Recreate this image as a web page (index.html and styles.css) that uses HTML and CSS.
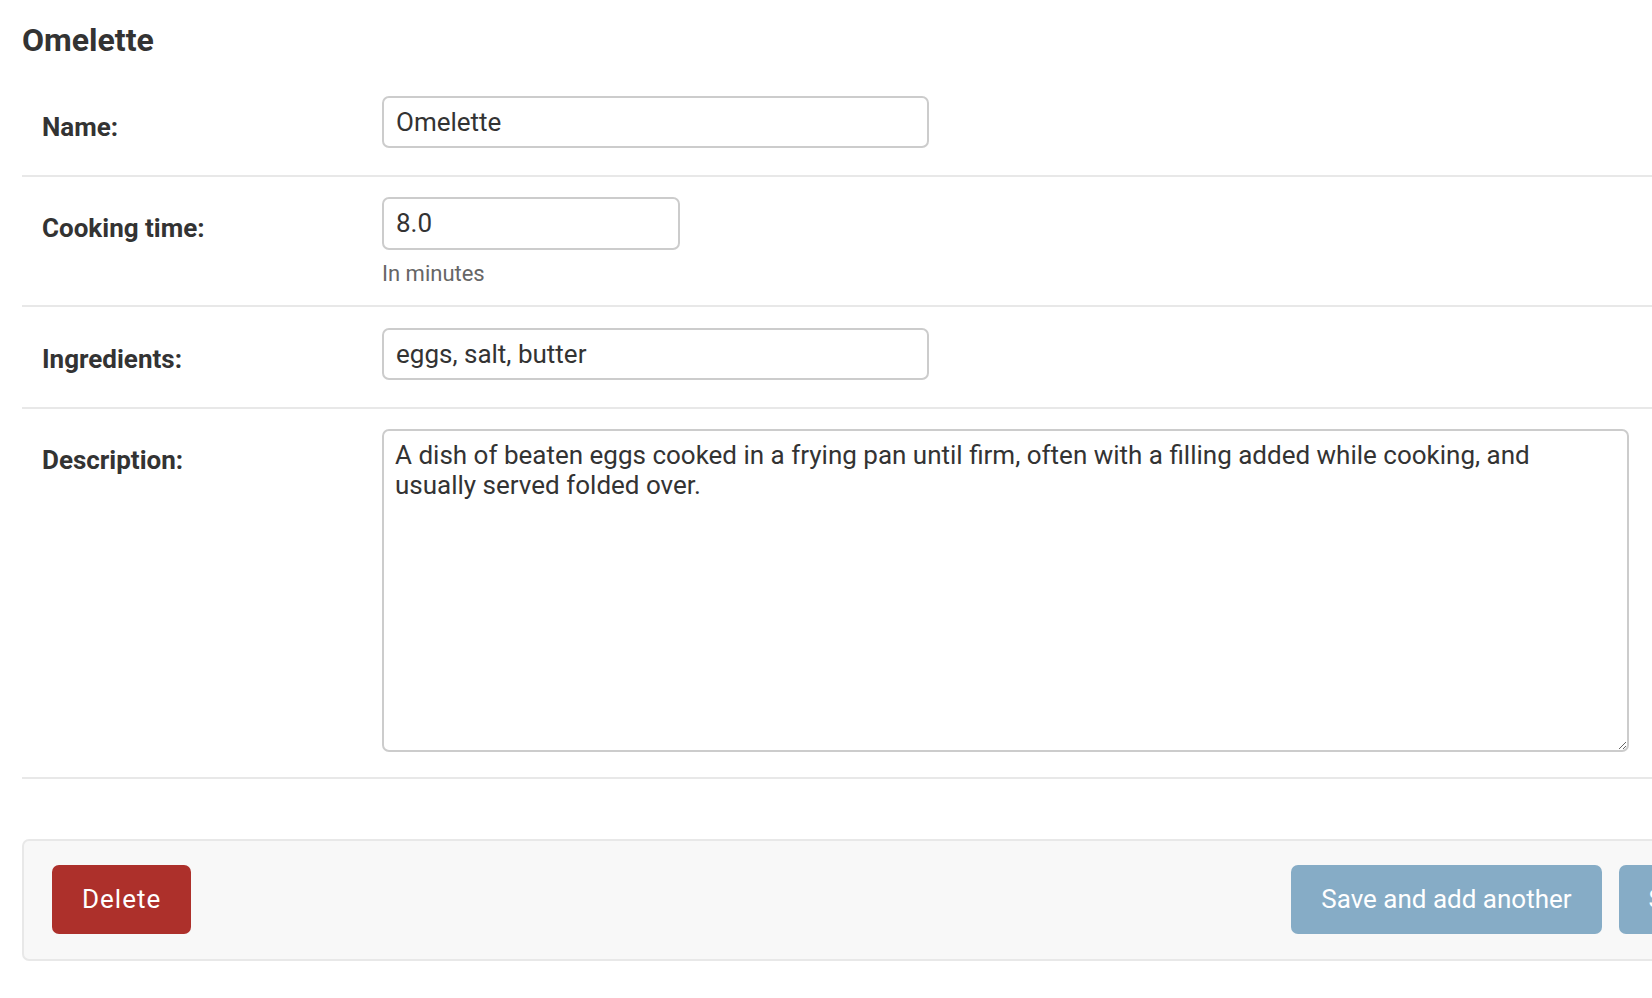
FILE: index.html
```html
<!DOCTYPE html>
<html lang="en">
<head>
<meta charset="utf-8">
<title>Change recipe | Omelette</title>
<link rel="stylesheet" href="styles.css">
</head>
<body>
<div class="content">
  <h2 class="title">Omelette</h2>
  <form class="change-form">
    <fieldset class="module aligned">
      <div class="form-row">
        <label class="field-label" for="id_name">Name:</label>
        <div class="field">
          <input class="text-input wide" id="id_name" type="text" value="Omelette">
        </div>
      </div>
      <div class="form-row has-help">
        <label class="field-label" for="id_cooking_time">Cooking time:</label>
        <div class="field">
          <input class="text-input narrow" id="id_cooking_time" type="text" value="8.0">
          <div class="help">In minutes</div>
        </div>
      </div>
      <div class="form-row">
        <label class="field-label" for="id_ingredients">Ingredients:</label>
        <div class="field">
          <input class="text-input wide" id="id_ingredients" type="text" value="eggs, salt, butter">
        </div>
      </div>
      <div class="form-row last">
        <label class="field-label" for="id_description">Description:</label>
        <div class="field">
          <textarea class="text-area" id="id_description">A dish of beaten eggs cooked in a frying pan until firm, often with a filling added while cooking, and usually served folded over.</textarea>
        </div>
      </div>
    </fieldset>
    <div class="submit-row">
      <a class="btn btn-delete" href="#">Delete</a>
      <div class="btn-group">
        <span class="btn btn-save">Save and add another</span>
        <span class="btn btn-save">Save and continue editing</span>
        <span class="btn btn-save btn-default">Save</span>
      </div>
    </div>
  </form>
</div>
</body>
</html>
```
FILE: styles.css
```css
html, body {
  margin: 0;
  padding: 0;
  overflow: hidden;
  background: #ffffff;
}

body {
  font-family: Roboto, "Liberation Sans", sans-serif;
  color: #333333;
}

.content {
  padding: 22px 0 0 22px;
  width: 2116px;
}

.title {
  margin: 0 0 15.5px 0;
  font-size: 32px;
  font-weight: 700;
  line-height: 37.5px;
  color: #333333;
}

.change-form {
  margin: 0;
}

.module {
  margin: 0;
  padding: 0;
  border: 0;
}

.form-row {
  display: flex;
  align-items: flex-start;
  padding: 20.5px 20px 26.5px 20px;
  border-bottom: 2px solid #e8e8e8;
}

.form-row.has-help {
  padding-bottom: 18.5px;
}

.form-row.last {
  padding-bottom: 25.5px;
}

.field-label {
  flex: 0 0 340px;
  padding-top: 13px;
  font-size: 26px;
  font-weight: 700;
  line-height: 36px;
  color: #333333;
}

.field {
  display: flex;
  flex-direction: column;
}

.text-input,
.text-area {
  box-sizing: border-box;
  margin: 0;
  font-family: Roboto, "Liberation Sans", sans-serif;
  font-size: 26px;
  color: #333333;
  background: #ffffff;
  border: 2px solid #cccccc;
  border-radius: 7px;
  outline: none;
}

.text-input {
  height: 52.6px;
  padding: 0 12px;
  line-height: 30px;
}

.text-input.wide {
  width: 547px;
}

.text-input.narrow {
  width: 298px;
}

.text-area {
  width: 1247px;
  height: 322.5px;
  padding: 10px 11px;
  line-height: 29.5px;
  resize: vertical;
}

.help {
  margin-top: 11px;
  font-size: 22px;
  line-height: 26px;
  color: #666666;
}

.submit-row {
  display: flex;
  align-items: center;
  margin-top: 60px;
  padding: 24px 28px 25px 28px;
  background: #f8f8f8;
  border: 2px solid #e8e8e8;
  border-radius: 7px;
}

.btn-group {
  display: flex;
  gap: 17px;
  margin-left: auto;
}

.btn {
  display: block;
  padding: 19px 30px;
  font-size: 26px;
  line-height: 30.5px;
  color: #ffffff;
  text-decoration: none;
  border-radius: 7px;
  white-space: nowrap;
}

.btn-delete {
  background: #ad302b;
  letter-spacing: 1px;
}

.btn-save {
  background: #86acc6;
}

.btn-default {
  background: #417690;
}
```
